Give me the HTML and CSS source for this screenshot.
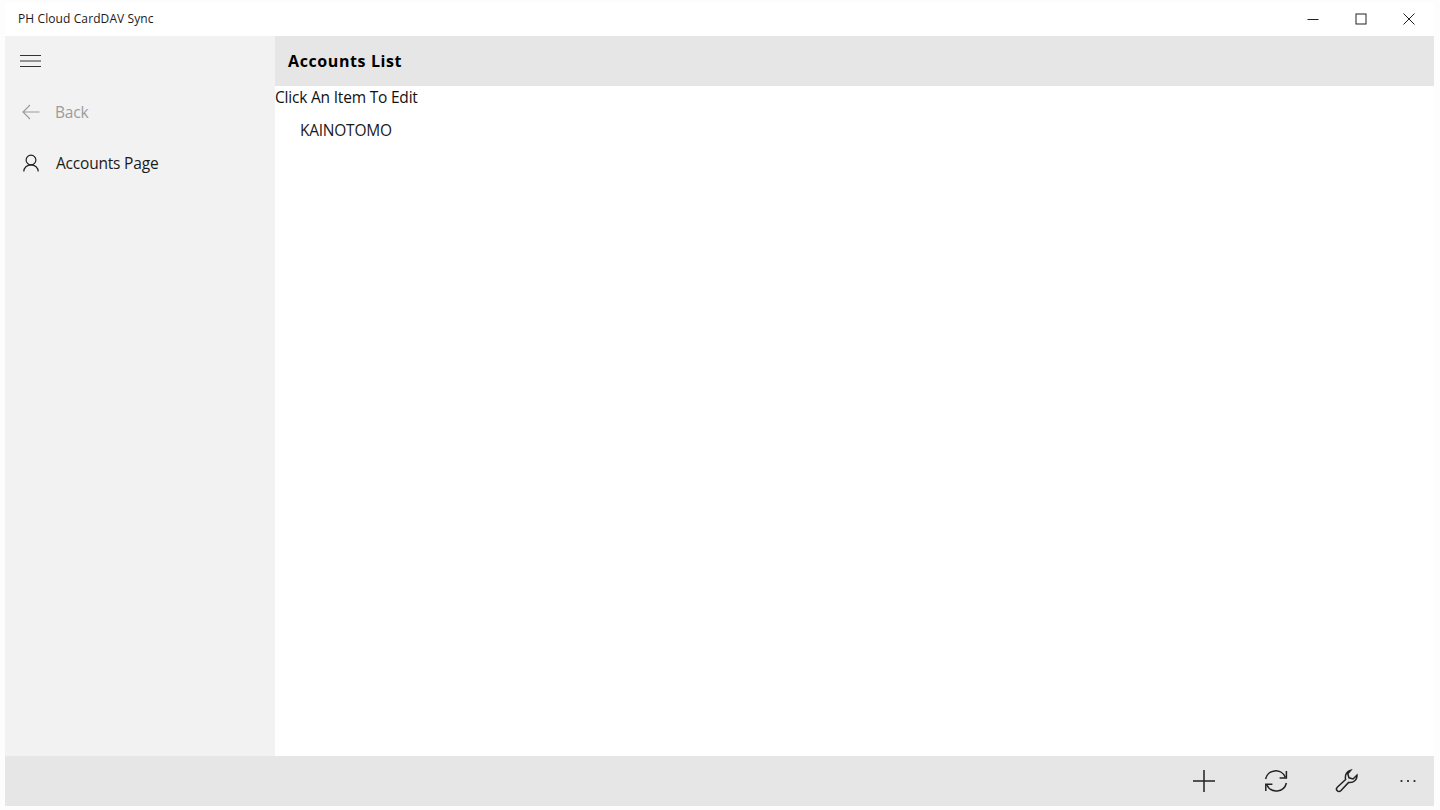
FILE: index.html
```html
<!DOCTYPE html>
<html lang="en">
  <head>
    <meta charset="UTF-8" />
    <title>PH Cloud CardDAV Sync</title>
    <link rel="stylesheet" href="styles.css">
  </head>
  <body>
    <div class="window">
      <!-- title bar -->
      <div class="titlebar">
        <span class="app-title">PH Cloud CardDAV Sync</span>
        <div class="win-buttons">
          <svg class="win-btn" viewBox="0 0 12 12"><path d="M0.5 6.5H11.5" /></svg>
          <svg class="win-btn" viewBox="0 0 12 12"><rect x="1" y="1" width="10" height="10" /></svg>
          <svg class="win-btn" viewBox="0 0 12 12"><path d="M0.5 0.5L11.5 11.5M11.5 0.5L0.5 11.5" /></svg>
        </div>
      </div>

      <div class="main">
        <!-- side menu -->
        <div class="sidebar">
          <div class="hamburger">
            <svg width="22" height="14" viewBox="0 0 22 14"><path d="M0 1.5H21M0 7H21M0 12.5H21" /></svg>
          </div>
          <div class="nav-item nav-disabled">
            <svg class="nav-icon" viewBox="0 0 18 16"><path d="M17.5 8H1M8 1L1 8L8 15" /></svg>
            <span>Back</span>
          </div>
          <div class="nav-item">
            <svg class="nav-icon" viewBox="0 0 18 18"><circle cx="9" cy="6" r="4.9" /><path d="M1.8 17.5C1.8 13.5 5 10.9 9 10.9C13 10.9 16.2 13.5 16.2 17.5" /></svg>
            <span>Accounts Page</span>
          </div>
        </div>

        <!-- page content -->
        <div class="content">
          <div class="page-header">Accounts List</div>
          <div class="hint">Click An Item To Edit</div>
          <div class="account-item">KAINOTOMO</div>
        </div>
      </div>

      <!-- command bar -->
      <div class="commandbar">
        <button class="cmd-btn">
          <svg viewBox="0 0 24 24"><path d="M12 1V23M1 12H23" /></svg>
        </button>
        <button class="cmd-btn">
          <svg viewBox="0 0 24 24"><path d="M1.6 10A10.4 10.4 0 0 1 21.4 8.4M22.4 14A10.4 10.4 0 0 1 2.8 15.8" /><path d="M22.4 2V9H15.6M1.8 22V15.2H8.4" /></svg>
        </button>
        <button class="cmd-btn">
          <svg viewBox="0 0 24 24"><path d="M2.3 18.2L10.6 10.5C9.6 6 12 2 15.8 1.2L12.8 4.8L14 8.8L18 10L22 6.2C22.4 10.5 18.6 14.2 13.6 13.4L5.8 21.8A2.5 2.5 0 0 1 2.3 18.2Z" /></svg>
        </button>
        <button class="cmd-btn cmd-more">
          <svg viewBox="0 0 16 4"><circle cx="1.5" cy="2" r="1.1" /><circle cx="8" cy="2" r="1.1" /><circle cx="14.5" cy="2" r="1.1" /></svg>
        </button>
      </div>
    </div>
  </body>
</html>
```

FILE: styles.css
```css
html,
body {
  height: 100%;
  margin: 0;
}
body {
  background-color: #fdfdfd;
  font-family: "Open Sans", "Noto Sans", sans-serif;
  color: #1a1a1a;
  overflow: hidden;
}
svg {
  fill: none;
  stroke: currentColor;
}
.window {
  display: flex;
  flex-direction: column;
  height: 803px;
  margin: 3px 6px 0 5px;
  background-color: white;
}

/* title bar */
.titlebar {
  display: flex;
  align-items: center;
  justify-content: space-between;
  height: 31px;
  padding-bottom: 2px;
  flex-shrink: 0;
}
.app-title {
  margin-left: 13px;
  font-size: 12px;
  letter-spacing: 0.1px;
}
.win-buttons {
  display: flex;
  gap: 36px;
  margin-right: 19px;
}
.win-btn {
  width: 12px;
  height: 12px;
  stroke: #222;
  stroke-width: 1;
}

.main {
  display: flex;
  flex: 1;
  min-height: 0;
}

/* side menu */
.sidebar {
  width: 270px;
  flex-shrink: 0;
  background-color: #f2f2f2;
}
.hamburger {
  display: flex;
  align-items: center;
  height: 50px;
  padding-left: 15px;
}
.hamburger svg {
  stroke: #333;
  stroke-width: 1.2;
}
.nav-item {
  display: flex;
  align-items: center;
  height: 51px;
  padding-left: 17px;
  font-size: 15.5px;
  letter-spacing: -0.2px;
}
.nav-disabled {
  color: #9c9c9c;
}
.nav-disabled span {
  margin-left: -1px;
}
.nav-icon {
  width: 18px;
  height: 18px;
  margin-right: 16px;
  stroke-width: 1.15;
}

/* page content */
.content {
  flex: 1;
  min-width: 0;
}
.page-header {
  display: flex;
  align-items: center;
  height: 50px;
  padding-left: 13px;
  background-color: #e6e6e6;
  color: #000;
  font-size: 16px;
  font-weight: 700;
  letter-spacing: 0.6px;
}
.hint {
  height: 24px;
  line-height: 23px;
  font-size: 15.5px;
  letter-spacing: -0.2px;
  color: #111;
}
.account-item {
  height: 42px;
  line-height: 41px;
  padding-left: 25px;
  font-size: 15.5px;
  letter-spacing: -0.25px;
}

/* command bar */
.commandbar {
  display: flex;
  align-items: center;
  justify-content: flex-end;
  height: 50px;
  flex-shrink: 0;
  padding-right: 18px;
  background-color: #e6e6e6;
}
.cmd-btn {
  display: flex;
  align-items: center;
  justify-content: center;
  width: 24px;
  height: 24px;
  margin-left: 47.5px;
  padding: 0;
  border: none;
  background: none;
  color: #222;
}
.cmd-btn svg {
  width: 24px;
  height: 24px;
  stroke-width: 1.5;
}
.cmd-more {
  width: 16px;
  margin-left: 41px;
}
.cmd-more svg {
  width: 16px;
  height: 4px;
  fill: #222;
  stroke: none;
}
```
